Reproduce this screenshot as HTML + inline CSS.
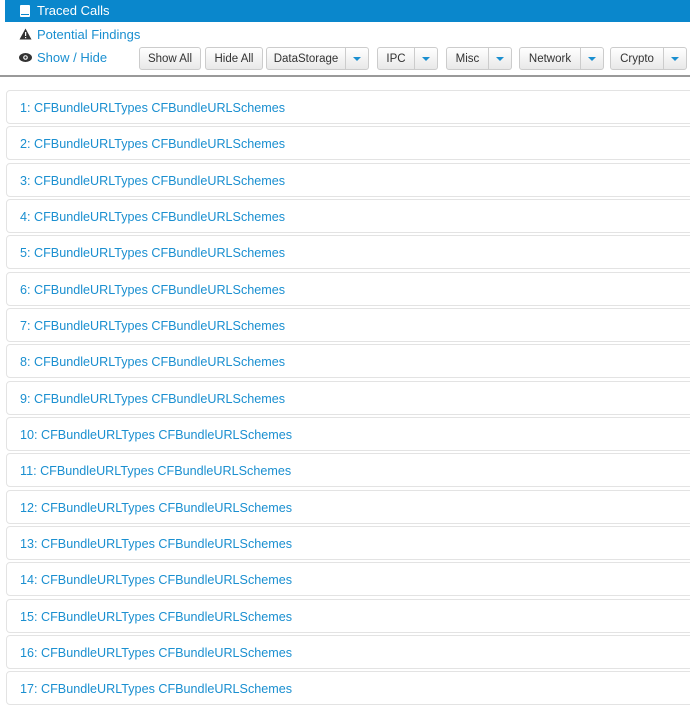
<!DOCTYPE html>
<html><head><style>
body{margin:0;width:690px;height:687px;overflow:hidden;background:#fff;font-family:"Liberation Sans",sans-serif;position:relative}
.hdr{position:absolute;left:5px;top:0;width:685px;height:22px;background:#0a87cc;color:#fff;font-size:13px;line-height:22px}
.hdr span{position:absolute;left:32px}
.lnk{position:absolute;color:#1a8fd0;font-size:13px}
.btn{position:absolute;top:47px;height:21px;border:1px solid #ccc;border-radius:3px;background:linear-gradient(#fff,#e8e8e8);font-size:11.5px;color:#333;line-height:22px;text-align:center;box-sizing:content-box}
.car{position:absolute;top:47px;height:21px;width:22px;border:1px solid #ccc;border-radius:0 3px 3px 0;background:linear-gradient(#fff,#e8e8e8)}
.car:after{content:"";position:absolute;left:7px;top:9px;border-left:4px solid transparent;border-right:4px solid transparent;border-top:4px solid #1a8fd0}
.sep{position:absolute;left:0;top:75px;width:690px;height:2px;background:#999}
.row{position:absolute;left:6px;width:700px;height:32px;border:1px solid #e3e3e3;border-radius:4px;color:#1a8fd0;font-size:12.6px;line-height:34px;box-sizing:content-box}
.row span{position:absolute;left:13px}
</style></head><body>
<div class="hdr"><svg style="position:absolute;left:15px;top:5px" width="10" height="12"><rect x="0" y="0" width="10" height="12" rx="1" fill="#fff"/><rect x="1" y="9" width="8" height="1" fill="#0a87cc"/></svg><span>Traced Calls</span></div>
<svg style="position:absolute;left:19px;top:28px" width="13" height="12"><path d="M6.5 0.5L12.5 11.5H0.5Z" fill="#333"/><rect x="6" y="4" width="1.2" height="4" fill="#fff"/><rect x="6" y="9" width="1.2" height="1.2" fill="#fff"/></svg>
<div class="lnk" style="left:37px;top:27px">Potential Findings</div>
<svg style="position:absolute;left:19px;top:53px" width="13" height="9"><ellipse cx="6.5" cy="4.5" rx="6.5" ry="4.5" fill="#333"/><circle cx="6.5" cy="4.5" r="2.3" fill="#fff"/><circle cx="6.5" cy="4.5" r="1.2" fill="#333"/></svg>
<div class="lnk" style="left:37px;top:50px">Show / Hide</div>
<div class="btn" style="left:139px;width:60px">Show All</div>
<div class="btn" style="left:205px;width:56px">Hide All</div>
<div class="btn" style="left:266px;width:78px;border-radius:3px 0 0 3px">DataStorage</div><div class="car" style="left:345px"></div>
<div class="btn" style="left:377px;width:36px;border-radius:3px 0 0 3px">IPC</div><div class="car" style="left:414px"></div>
<div class="btn" style="left:446px;width:41px;border-radius:3px 0 0 3px">Misc</div><div class="car" style="left:488px"></div>
<div class="btn" style="left:519px;width:60px;border-radius:3px 0 0 3px">Network</div><div class="car" style="left:580px"></div>
<div class="btn" style="left:610px;width:52px;border-radius:3px 0 0 3px">Crypto</div><div class="car" style="left:663px"></div>
<div class="sep"></div>
<div class="row" style="top:90px"><span>1: CFBundleURLTypes CFBundleURLSchemes</span></div>
<div class="row" style="top:126px"><span>2: CFBundleURLTypes CFBundleURLSchemes</span></div>
<div class="row" style="top:163px"><span>3: CFBundleURLTypes CFBundleURLSchemes</span></div>
<div class="row" style="top:199px"><span>4: CFBundleURLTypes CFBundleURLSchemes</span></div>
<div class="row" style="top:235px"><span>5: CFBundleURLTypes CFBundleURLSchemes</span></div>
<div class="row" style="top:272px"><span>6: CFBundleURLTypes CFBundleURLSchemes</span></div>
<div class="row" style="top:308px"><span>7: CFBundleURLTypes CFBundleURLSchemes</span></div>
<div class="row" style="top:344px"><span>8: CFBundleURLTypes CFBundleURLSchemes</span></div>
<div class="row" style="top:381px"><span>9: CFBundleURLTypes CFBundleURLSchemes</span></div>
<div class="row" style="top:417px"><span>10: CFBundleURLTypes CFBundleURLSchemes</span></div>
<div class="row" style="top:453px"><span>11: CFBundleURLTypes CFBundleURLSchemes</span></div>
<div class="row" style="top:490px"><span>12: CFBundleURLTypes CFBundleURLSchemes</span></div>
<div class="row" style="top:526px"><span>13: CFBundleURLTypes CFBundleURLSchemes</span></div>
<div class="row" style="top:562px"><span>14: CFBundleURLTypes CFBundleURLSchemes</span></div>
<div class="row" style="top:599px"><span>15: CFBundleURLTypes CFBundleURLSchemes</span></div>
<div class="row" style="top:635px"><span>16: CFBundleURLTypes CFBundleURLSchemes</span></div>
<div class="row" style="top:671px"><span>17: CFBundleURLTypes CFBundleURLSchemes</span></div>
</body></html>
